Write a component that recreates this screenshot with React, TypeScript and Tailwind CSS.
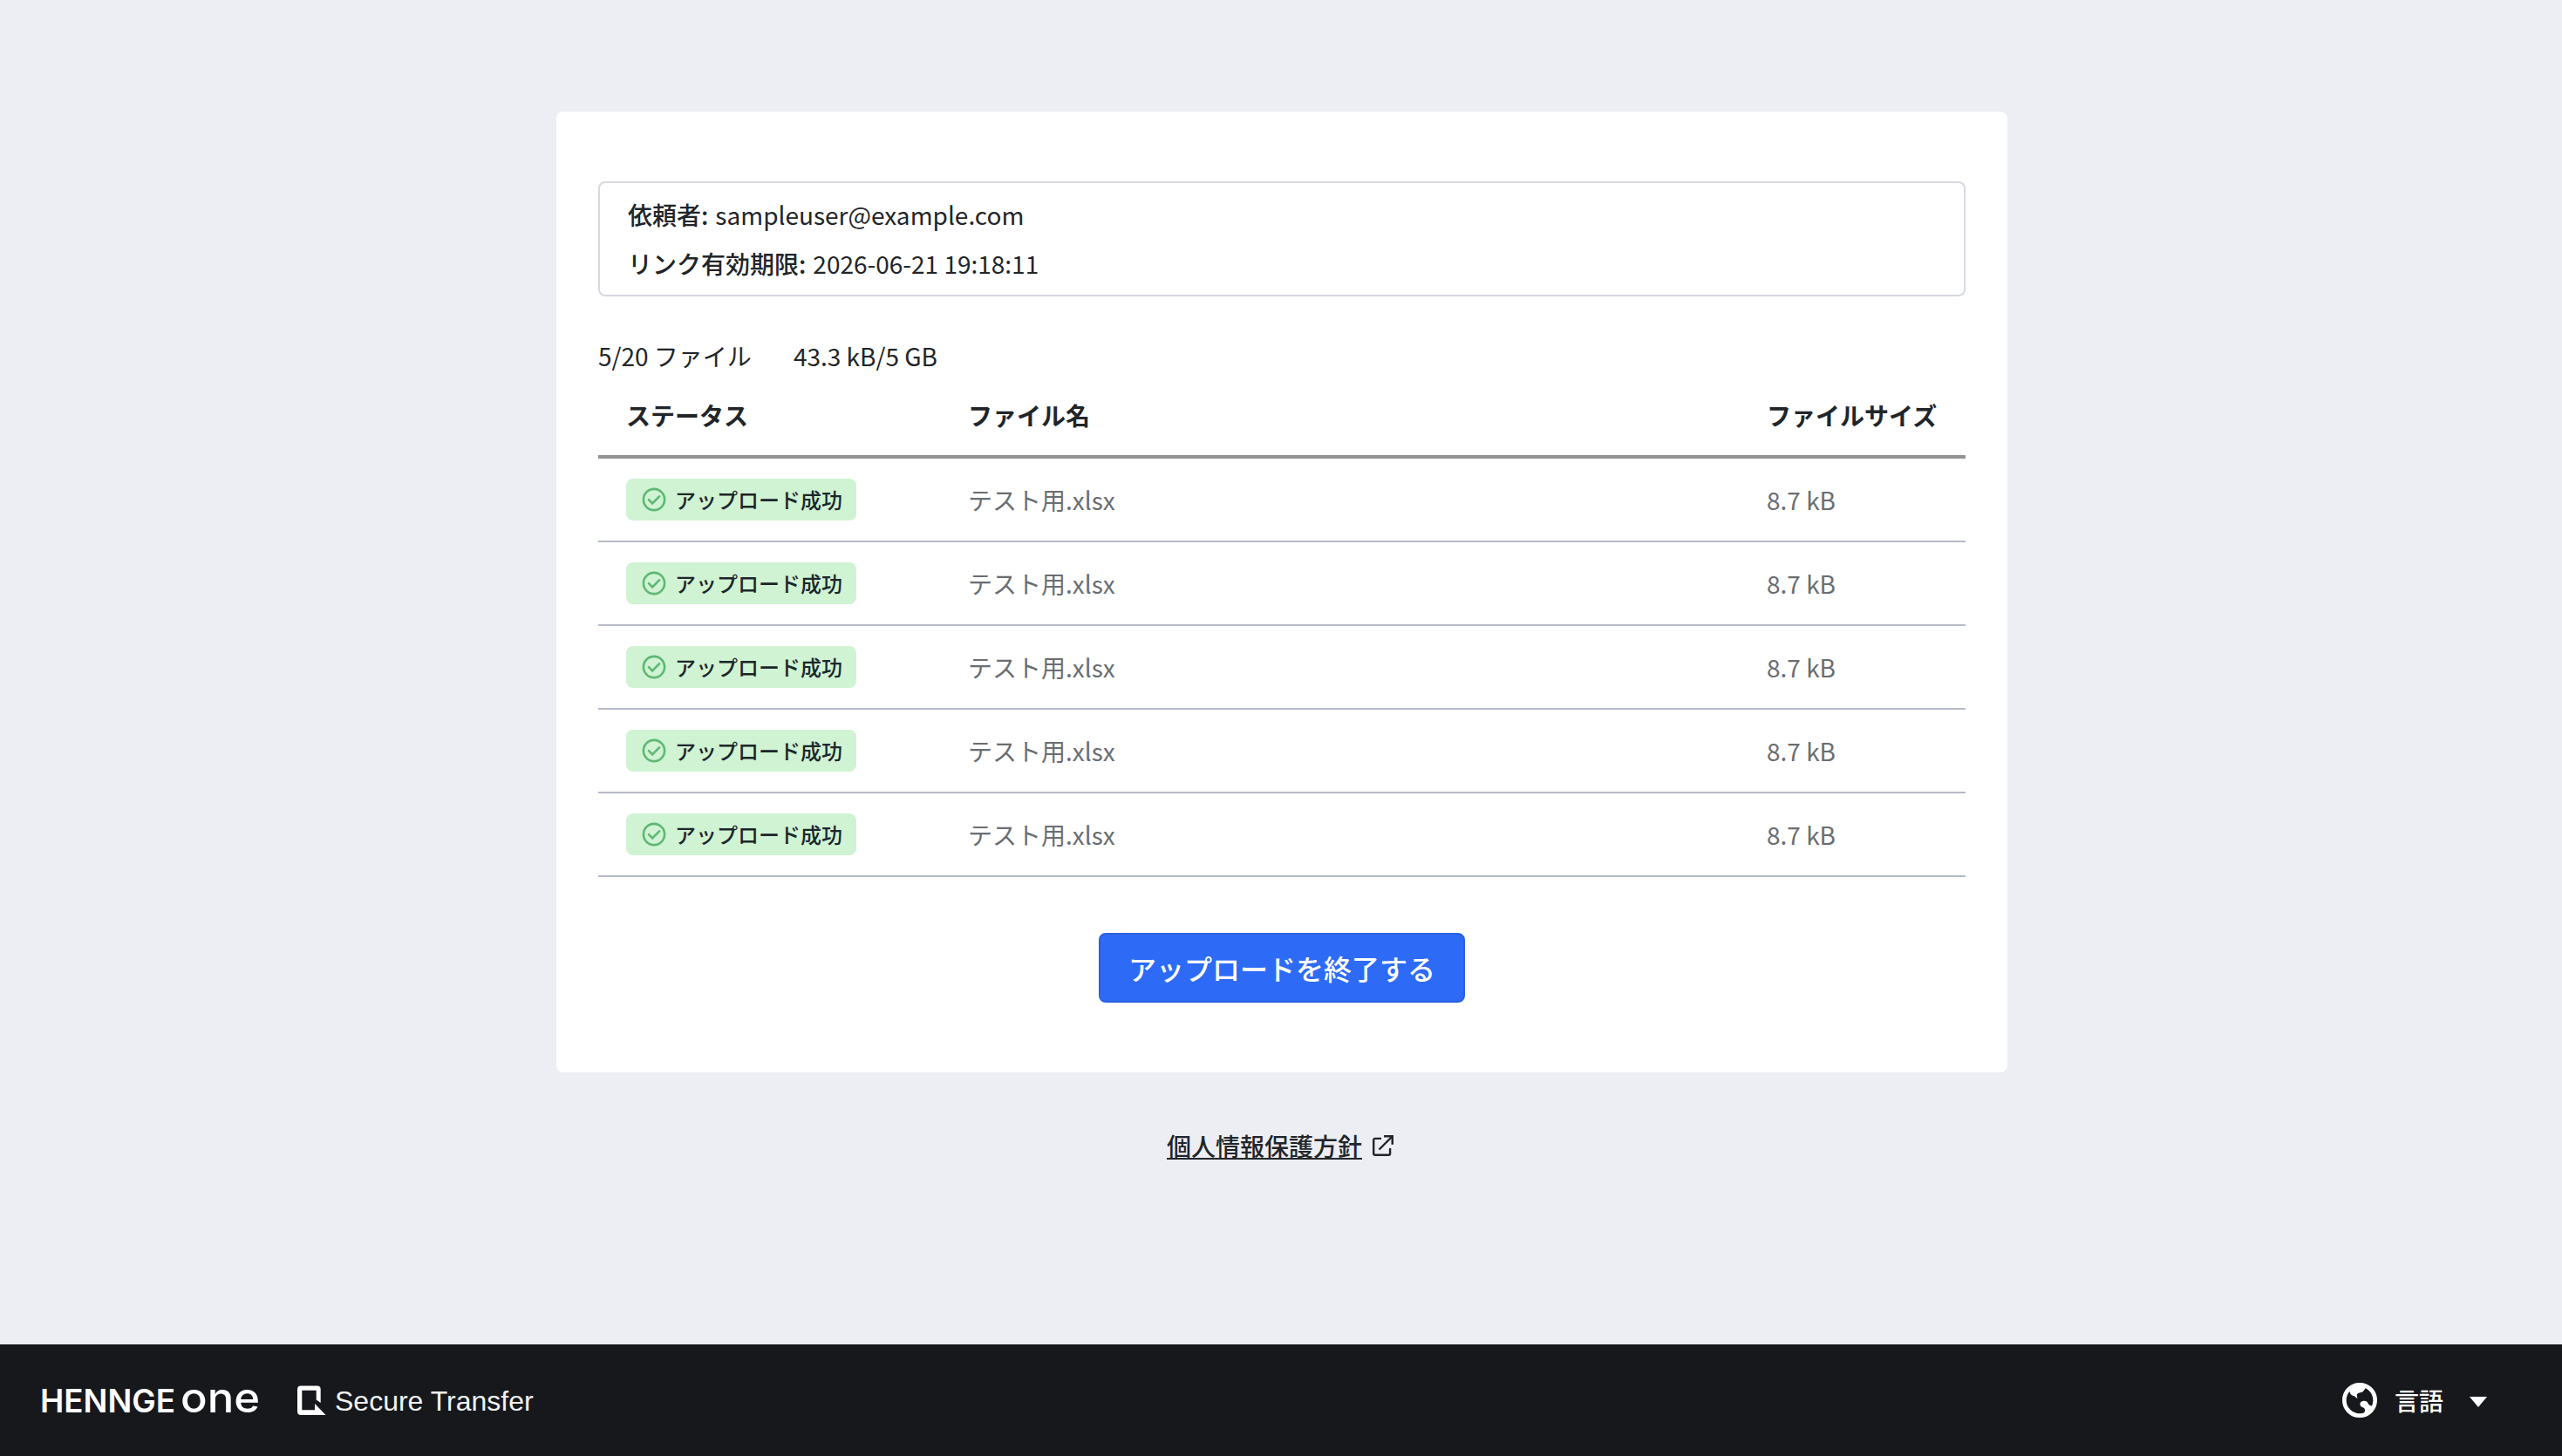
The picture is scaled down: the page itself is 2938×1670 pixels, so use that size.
import React from 'react'

interface UploadedFile {
  id: number
  name: string
  size: string
}

const files: UploadedFile[] = [
  { id: 1, name: 'テスト用.xlsx', size: '8.7 kB' },
  { id: 2, name: 'テスト用.xlsx', size: '8.7 kB' },
  { id: 3, name: 'テスト用.xlsx', size: '8.7 kB' },
  { id: 4, name: 'テスト用.xlsx', size: '8.7 kB' },
  { id: 5, name: 'テスト用.xlsx', size: '8.7 kB' },
]

function CheckCircle() {
  return (
    <svg className="size-8" viewBox="0 0 32 32" fill="none" stroke="#5fb774" strokeWidth="2.6">
      <circle cx="16" cy="16" r="12.1" />
      <path d="M10 16.1l4.1 4.2 8-8" strokeLinecap="round" />
    </svg>
  )
}

function ExternalIcon() {
  return (
    <svg className="size-6" viewBox="0 0 24 24" fill="none" stroke="#212529" strokeWidth="2.4">
      <path d="M10 3.9H3Q1.2 3.9 1.2 5.7V21Q1.2 22.8 3 22.8H18.3Q20.1 22.8 20.1 21V15" />
      <path d="M7.5 16.5L21.5 2.5" />
      <path d="M13 0H24V10.8H21.5V4.3L19.7 2.5H13Z" fill="#212529" stroke="none" />
    </svg>
  )
}

function GlobeIcon() {
  return (
    <svg className="size-10" viewBox="18 17 120 120" fill="#fff">
      <circle cx="78" cy="77" r="53" fill="none" stroke="#fff" strokeWidth="14" />
      <path d="M42 40L45 52Q47 60 60 63L70 72L68 58Q70 52 80 51Q90 50 92 44L99 34L110 42L104 26L78 20L55 25Z" />
      <path d="M79 90Q80 80 93 79Q104 79 107 88Q110 96 124 97L112 122L88 130Q97 117 96 109Q95 103 87 101Q79 98 79 90Z" />
    </svg>
  )
}

function StatusBadge() {
  return (
    <span className="flex h-12 w-[264px] items-center gap-2 rounded-[8px] bg-[#cff3d3] px-4 text-[24px] font-medium text-[#1c262b]">
      <CheckCircle />
      アップロード成功
    </span>
  )
}

function Footer() {
  return (
    <footer className="flex h-32 items-center bg-[#17181c] text-white">
      <svg className="ml-10 h-24 w-[270px]" viewBox="0 0 270 96" fill="#fff">
        <text x="6" y="61.5" fontFamily="Inter" fontWeight="600" fontSize="36.6" textLength="155" lengthAdjust="spacingAndGlyphs">HENNGE</text>
        <text x="167" y="61.8" fontFamily="Inter" fontWeight="500" fontSize="48" textLength="91" lengthAdjust="spacingAndGlyphs">one</text>
      </svg>
      <svg className="ml-[30px] size-[34px]" viewBox="0 0 34 34" fill="#fff">
        <path d="M5 .5H23.7Q27.7 .5 27.7 4.5V20L22.7 16.5V5.7H6.3V28.3H21V21L33.5 34H5Q1 34 1 30V4.5Q1 .5 5 .5Z" />
      </svg>
      <span className="mt-0.5 ml-[10px] font-['Liberation_Sans'] text-[32px] text-[#f2f2f5]">Secure Transfer</span>
      <div className="mr-[86px] ml-auto flex items-center">
        <GlobeIcon />
        <span className="ml-5 text-[28px] font-medium">言語</span>
        <svg className="mt-1 ml-[30px] h-3 w-5" viewBox="0 0 20 12" fill="#fff">
          <path d="M0 0H20L10 12Z" />
        </svg>
      </div>
    </footer>
  )
}

export default function App() {
  return (
    <div className="flex h-[1670px] w-[2938px] flex-col bg-[#edeef3] font-['Noto_Sans_CJK_JP',sans-serif] text-[28px] leading-[40px] text-[#212529]">
      <main className="flex flex-1 flex-col items-center pt-32">
        <section className="ml-[2px] flex h-[1102px] w-[1664px] flex-col rounded-[8px] bg-white px-12 pt-20">
          <div className="flex h-[132px] flex-col gap-4 rounded-[8px] border-2 border-[#d6d9e0] px-8 pt-4">
            <p className="flex gap-[8px]"><span className="font-medium">依頼者:</span> sampleuser@example.com</p>
            <p className="flex gap-[8px]"><span className="font-medium">リンク有効期限:</span> 2026-06-21 19:18:11</p>
          </div>

          <div className="mt-12 flex gap-12">
            <span>5/20 ファイル</span>
            <span>43.3 kB/5 GB</span>
          </div>

          <table className="mt-4 w-full table-fixed border-separate border-spacing-0 text-left">
            <colgroup>
              <col className="w-[392px]" />
              <col />
              <col className="w-[260px]" />
            </colgroup>
            <thead>
              <tr className="h-[82px] align-top">
                <th className="border-b-4 border-[#929292] px-8 pt-3 font-bold">ステータス</th>
                <th className="border-b-4 border-[#929292] px-8 pt-3 font-bold">ファイル名</th>
                <th className="border-b-4 border-[#929292] px-8 pt-3 font-bold">ファイルサイズ</th>
              </tr>
            </thead>
            <tbody>
              {files.map((file) => (
                <tr key={file.id} className="h-24">
                  <td className="border-b-2 border-[#b5bac6] px-8"><StatusBadge /></td>
                  <td className="border-b-2 border-[#b5bac6] px-8 text-[#6a6d72]">{file.name}</td>
                  <td className="border-b-2 border-[#b5bac6] px-8 text-[#6a6d72]">{file.size}</td>
                </tr>
              ))}
            </tbody>
          </table>

          <button className="mt-16 h-20 w-[420px] self-center rounded-[8px] border-2 border-[#2860e0] bg-[#2d6bf7] text-[32px] font-medium text-white">
            アップロードを終了する
          </button>
        </section>

        <a href="#" className="mt-16 mr-[2px] flex items-center gap-3">
          <span className="font-medium underline">個人情報保護方針</span>
          <ExternalIcon />
        </a>
      </main>
      <Footer />
    </div>
  )
}
